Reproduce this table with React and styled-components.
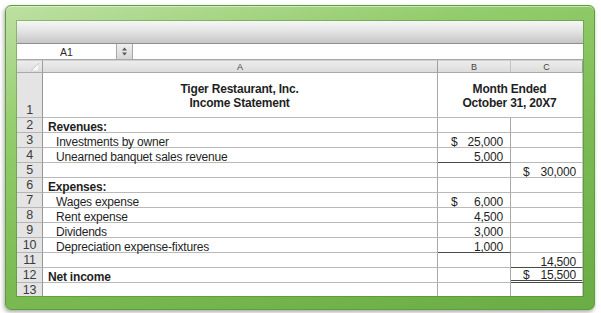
import React from 'react';
import styled, { createGlobalStyle, css } from 'styled-components';

const Global = createGlobalStyle`
  html, body { margin: 0; padding: 0; background: #ffffff; }
  body { font-family: 'Liberation Sans', Arial, sans-serif; }
`;

const Page = styled.div`
  width: 601px;
  height: 313px;
  padding: 5px 6px 3px 5px;
  box-sizing: border-box;
`;

const Frame = styled.div`
  width: 590px;
  height: 305px;
  box-sizing: border-box;
  padding: 15px 12px 14px 11px;
  border-radius: 6px;
  border: 1px solid #5f9c3c;
  background: linear-gradient(165deg, #bde0a2 0%, #93cc6c 28%, #7cbb53 60%, #6aac45 100%);
  box-shadow: -1px 2px 4px rgba(0, 0, 0, 0.35), inset 0 1px 0 rgba(255, 255, 255, 0.5);
`;

const Window = styled.div`
  width: 566px;
  height: 275px;
  overflow: hidden;
  display: flex;
  flex-direction: column;
  background: #ffffff;
  box-shadow: 0 0 0 1px rgba(60, 110, 40, 0.35);
`;

const Toolbar = styled.div`
  height: 23px;
  flex: none;
  box-sizing: border-box;
  background: linear-gradient(180deg, #f6f6f6 0%, #e4e4e4 45%, #c6c6c6 100%);
  border-bottom: 1px solid #8e8e8e;
`;

const FormulaBar = styled.div`
  height: 16px;
  flex: none;
  display: flex;
  box-sizing: border-box;
  border-bottom: 1px solid #a9a9a9;
  background: #ffffff;
`;

const NameBox = styled.div`
  width: 100px;
  box-sizing: border-box;
  border-right: 1px solid #a8a8a8;
  display: flex;
  align-items: center;
  justify-content: center;
  font-size: 10.5px;
  color: #2a2a2a;
`;

const Spinner = styled.div`
  width: 16px;
  box-sizing: border-box;
  border-right: 1px solid #a8a8a8;
  background: linear-gradient(180deg, #f0f0f0, #d6d6d6);
  display: flex;
  align-items: center;
  justify-content: center;
`;

const FormulaInput = styled.div`
  flex: 1;
  background: #ffffff;
`;

const Sheet = styled.div`
  display: grid;
  grid-template-columns: 26px 395px 73px 72px;
  grid-template-rows: 13px 45px repeat(12, 15px);
  flex: none;
`;

const ColHead = styled.div`
  box-sizing: border-box;
  border-top: 1px solid #cfcfcf;
  border-bottom: 1px solid #a9a9a9;
  border-right: 1px solid ${(p) => (p.$light ? '#c4c4c4' : '#9d9d9d')};
  background: linear-gradient(180deg, #ededed, #dcdcdc);
  display: flex;
  align-items: center;
  justify-content: ${(p) => (p.$corner ? 'flex-end' : 'center')};
  padding-right: ${(p) => (p.$corner ? '3px' : '0')};
  font-size: 9px;
  color: #444444;
`;

const RowHead = styled.div`
  box-sizing: border-box;
  border-right: 1px solid #979797;
  border-bottom: 1px solid #b5b5b5;
  background: #e4e4e4;
  display: flex;
  align-items: flex-end;
  justify-content: center;
  font-size: 12.5px;
  line-height: 11px;
  letter-spacing: -0.3px;
  padding-bottom: 1px;
  color: #3c3c3c;
`;

const underline = {
  single: css`border-bottom: 1px solid #4a4a4a;`,
  double: css`border-bottom: 3px double #4a4a4a;`,
};

const Cell = styled.div`
  box-sizing: border-box;
  border-right: 1px solid ${(p) => (p.$lastCol ? '#c6c6c6' : '#a9a9a9')};
  border-bottom: 1px solid #b9b9b9;
  ${(p) => p.$under && underline[p.$under]}
  grid-column: ${(p) => p.$span || 'auto'};
  display: flex;
  align-items: flex-end;
  justify-content: ${(p) => (p.$center ? 'center' : 'space-between')};
  padding: 0 ${(p) => p.$pr ?? 6}px 0 ${(p) => p.$pl ?? 5}px;
  font-size: 12px;
  line-height: 10px;
  letter-spacing: -0.2px;
  font-weight: ${(p) => (p.$bold ? 700 : 400)};
  color: #1f1f1f;
  white-space: nowrap;
`;

const Title = styled.div`
  text-align: center;
  font-weight: 700;
  font-size: 12px;
  letter-spacing: -0.2px;
  line-height: 14px;
  padding-bottom: 7px;
  width: 100%;
`;

const Num = styled.span`
  margin-left: auto;
`;

const SpinIcon = () => (
  <svg width="7" height="9" viewBox="0 0 7 9">
    <path d="M3.5 0.5 L6 3.5 L1 3.5 Z" fill="#5a5a5a" />
    <path d="M3.5 8.5 L6 5.5 L1 5.5 Z" fill="#5a5a5a" />
  </svg>
);

const CornerIcon = () => (
  <svg width="8" height="8" viewBox="0 0 8 8">
    <path d="M8 0 L8 8 L0 8 Z" fill="#fbfbfb" stroke="#b0b0b0" strokeWidth="0.6" />
  </svg>
);

const rows = [
  { n: 2, a: 'Revenues:', bold: true },
  { n: 3, a: 'Investments by owner', indent: true, b: { d: true, v: '25,000' } },
  { n: 4, a: 'Unearned banquet sales revenue', indent: true, b: { v: '5,000', u: 'single' } },
  { n: 5, c: { d: true, v: '30,000' } },
  { n: 6, a: 'Expenses:', bold: true },
  { n: 7, a: 'Wages expense', indent: true, b: { d: true, v: '6,000' } },
  { n: 8, a: 'Rent expense', indent: true, b: { v: '4,500' } },
  { n: 9, a: 'Dividends', indent: true, b: { v: '3,000' } },
  { n: 10, a: 'Depreciation expense-fixtures', indent: true, b: { v: '1,000', u: 'single' } },
  { n: 11, c: { v: '14,500', u: 'single' } },
  { n: 12, a: 'Net income', bold: true, c: { d: true, v: '15,500', u: 'double' } },
  { n: 13 },
];

const Money = ({ data, pl, pr, last }) => (
  <Cell $under={data?.u} $pl={pl} $pr={pr} $lastCol={last}>
    {data?.d ? <span>$</span> : null}
    {data ? <Num>{data.v}</Num> : null}
  </Cell>
);

export default function App() {
  return (
    <>
      <Global />
      <Page>
        <Frame>
          <Window>
            <Toolbar />
            <FormulaBar>
              <NameBox>A1</NameBox>
              <Spinner>
                <SpinIcon />
              </Spinner>
              <FormulaInput />
            </FormulaBar>
            <Sheet>
              <ColHead $corner>
                <CornerIcon />
              </ColHead>
              <ColHead>A</ColHead>
              <ColHead $light>B</ColHead>
              <ColHead>C</ColHead>

              <RowHead>1</RowHead>
              <Cell $center>
                <Title>
                  Tiger Restaurant, Inc.
                  <br />
                  Income Statement
                </Title>
              </Cell>
              <Cell $center $span="span 2" $lastCol>
                <Title>
                  Month Ended
                  <br />
                  October 31, 20X7
                </Title>
              </Cell>

              {rows.map((r) => (
                <React.Fragment key={r.n}>
                  <RowHead>{r.n}</RowHead>
                  <Cell $bold={r.bold} $pl={r.indent ? 13 : 5}>
                    {r.a || ''}
                  </Cell>
                  <Money data={r.b} pl={13} pr={7} />
                  <Money data={r.c} pl={12} pr={6} last />
                </React.Fragment>
              ))}
            </Sheet>
          </Window>
        </Frame>
      </Page>
    </>
  );
}
